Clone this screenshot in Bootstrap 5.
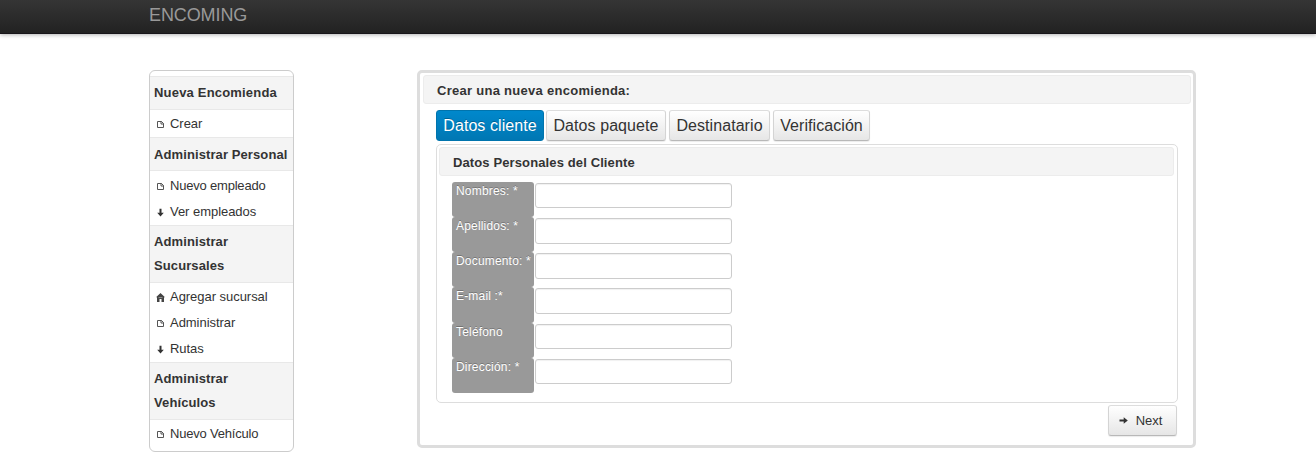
<!DOCTYPE html>
<html lang="es">
<head>
<meta charset="utf-8">
<meta name="viewport" content="width=device-width, initial-scale=1">
<title>Encoming</title>
<link href="https://cdn.jsdelivr.net/npm/bootstrap@5.3.0/dist/css/bootstrap.min.css" rel="stylesheet">
<style>
body{font-family:"Liberation Sans",Arial,sans-serif;font-size:13px;color:#333;background:#fff;height:475px;overflow:hidden}
.topbar{height:34px;padding:0 0 0 149px;background:linear-gradient(#353535,#222);border-bottom:1px solid #18151a;box-shadow:0 1px 4px rgba(0,0,0,.3)}
.topbar .navbar-brand{font-size:18px;line-height:20px;color:#999;padding:0;margin:-4px 0 0;letter-spacing:-.1px}
.layout{padding:36px 120px 0 149px;gap:123px}
.side{width:145px;height:382px;flex:none;border:1px solid #ccc;border-radius:6px;padding-top:5px}
.side h2{font-size:13px;font-weight:700;line-height:24px;margin:0;padding:4px 0 5px 4px;background:#f4f4f4;border-top:1px solid #e8e8e8;border-bottom:1px solid #e8e8e8;height:34px;letter-spacing:.1px}
.side h2.first{letter-spacing:.19px}
.side h2.second{padding-top:5px;padding-bottom:4px}
.side h2.tall{height:58px}
.side ul{margin:0;padding:1px 0 0}
.side ul.staff{padding-top:2px}
.side .nav-link{color:#333;font-size:13px;line-height:26px;height:26px;padding:0 0 0 6px;gap:5px;letter-spacing:-.04px}
.side .nav-link.tight{letter-spacing:-.2px}
.side svg{width:9px;height:9px;flex:none;margin-top:1px}
.panel{width:779px;height:378px;border:3px solid #ddd;border-radius:5px;padding:2px}
.title{height:29px;line-height:29px;background:#f4f4f4;border:1px solid #ececec;border-radius:3px;padding-left:14px;font-weight:700;font-size:13px;margin:0}
h1.title{letter-spacing:.28px;margin-left:1px;padding-left:13px}
h2.title{letter-spacing:.12px;padding-left:13px;margin-right:1px}
.tabs{padding:6px 0 0 14px;gap:3px}
.tabs .btn{height:31px;font-size:16px;line-height:29px;padding:0;letter-spacing:.07px;border-radius:3px}
.soft{color:#333;border:1px solid #ccc;border-color:#ddd #d4d4d4 #b8b8b8;border-radius:3px;background:linear-gradient(#fff,#e6e6e6);box-shadow:0 1px 1px rgba(0,0,0,.08)}
.tabs .current{color:#fff;background:linear-gradient(#08c,#0077b3);border:1px solid #0074ad;text-shadow:0 -1px 0 rgba(0,0,0,.25);margin-right:-1px}
.client{margin:3px 13px 0 14px;width:742px;height:259px;border:1px solid #ddd;border-radius:5px;padding:2px}
.fields{padding:6px 0 0 13px}
.field{height:35.15px;gap:1px}
.field label{width:82px;height:100%;background:#999;color:#fff;border-radius:3px;font-size:12px;line-height:18px;padding-left:4px;white-space:nowrap;letter-spacing:.18px;text-shadow:0 -1px 0 rgba(0,0,0,.25)}
.field .form-control{width:197px;height:25.4px;margin-top:1px;padding:0 6px;border:1px solid #ccc;border-radius:3px;font-size:13px;box-shadow:inset 0 1px 1px rgba(0,0,0,.06)}
.next{width:69px;height:31px;margin:2px 14px 0 0;padding:0 4px 0 0;font-size:13px;line-height:28px;gap:8px}
</style>
</head>
<body>
<svg class="d-none" xmlns="http://www.w3.org/2000/svg">
<symbol id="page" viewBox="0 0 9 9"><path d="M1.5 1.5H5.5L7.5 3.5V7.5H1.5Z" fill="#fff" stroke="#555"/><path d="M5 1V4H8" fill="none" stroke="#555"/></symbol>
<symbol id="down" viewBox="0 0 9 9"><path d="M3.5 .7H5.5V4.7H7.8L4.5 8.5 1.2 4.7H3.5Z" fill="#333"/></symbol>
<symbol id="home" viewBox="0 0 9 9"><path d="M4.5 0L9 4.2H8V9H5.5V6H3.5V9H1V4.2H0Z" fill="#444"/><path d="M2.5 4.6h4" stroke="#aaa" stroke-width=".8"/></symbol>
</svg>
<nav class="navbar topbar"><a class="navbar-brand" href="#">ENCOMING</a></nav>
<main class="layout d-flex align-items-start">
<aside class="side">
<h2 class="first">Nueva Encomienda</h2>
<ul class="nav flex-column"><li><a class="nav-link d-flex align-items-center" href="#"><svg><use href="#page"/></svg>Crear</a></li></ul>
<h2 class="second">Administrar Personal</h2>
<ul class="nav flex-column staff">
<li><a class="nav-link tight d-flex align-items-center" href="#"><svg><use href="#page"/></svg>Nuevo empleado</a></li>
<li><a class="nav-link d-flex align-items-center" href="#"><svg><use href="#down"/></svg>Ver empleados</a></li></ul>
<h2 class="tall">Administrar<br>Sucursales</h2>
<ul class="nav flex-column">
<li><a class="nav-link d-flex align-items-center" href="#"><svg><use href="#home"/></svg>Agregar sucursal</a></li>
<li><a class="nav-link d-flex align-items-center" href="#"><svg><use href="#page"/></svg>Administrar</a></li>
<li><a class="nav-link d-flex align-items-center" href="#"><svg><use href="#down"/></svg>Rutas</a></li></ul>
<h2 class="tall">Administrar<br>Vehículos</h2>
<ul class="nav flex-column"><li><a class="nav-link tight d-flex align-items-center" href="#"><svg><use href="#page"/></svg>Nuevo Vehículo</a></li></ul>
</aside>
<section class="panel">
<h1 class="title">Crear una nueva encomienda:</h1>
<div class="tabs d-flex">
<button class="btn current" style="width:108px">Datos cliente</button>
<button class="btn soft" style="width:120px">Datos paquete</button>
<button class="btn soft" style="width:101px">Destinatario</button>
<button class="btn soft" style="width:97px">Verificación</button>
</div>
<div class="client">
<h2 class="title">Datos Personales del Cliente</h2>
<form class="fields">
<div class="field d-flex"><label for="f1">Nombres: *</label><input id="f1" class="form-control"></div>
<div class="field d-flex"><label for="f2">Apellidos: *</label><input id="f2" class="form-control"></div>
<div class="field d-flex"><label for="f3">Documento: *</label><input id="f3" class="form-control"></div>
<div class="field d-flex"><label for="f4">E-mail :*</label><input id="f4" class="form-control"></div>
<div class="field d-flex"><label for="f5">Teléfono</label><input id="f5" class="form-control"></div>
<div class="field d-flex"><label for="f6">Dirección: *</label><input id="f6" class="form-control"></div>
</form>
</div>
<div class="d-flex justify-content-end"><button class="btn soft next d-flex align-items-center justify-content-center"><svg width="9" height="9" viewBox="0 0 9 9"><path d="M.5 3.5H4.7V1.3L8.8 4.5 4.7 7.7V5.5H.5Z" fill="#333"/></svg>Next</button></div>
</section>
</main>
<script src="https://cdn.jsdelivr.net/npm/bootstrap@5.3.0/dist/js/bootstrap.bundle.min.js"></script>
</body>
</html>
